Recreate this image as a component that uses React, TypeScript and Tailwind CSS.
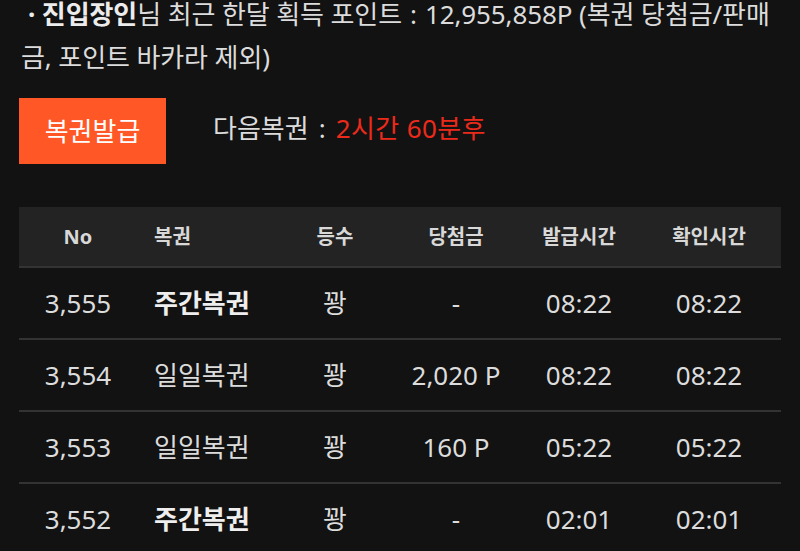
import React from "react";

const rows = [
  { no: "3,555", name: "주간복권", bold: true, rank: "꽝", prize: "-", issued: "08:22", checked: "08:22" },
  { no: "3,554", name: "일일복권", bold: false, rank: "꽝", prize: "2,020 P", issued: "08:22", checked: "08:22" },
  { no: "3,553", name: "일일복권", bold: false, rank: "꽝", prize: "160 P", issued: "05:22", checked: "05:22" },
  { no: "3,552", name: "주간복권", bold: true, rank: "꽝", prize: "-", issued: "02:01", checked: "02:01" },
];

const grid = "grid grid-cols-[118px_142px_112px_130px_116px_1fr] items-center";

export default function App() {
  return (
    <div
      className="w-[800px] h-[551px] overflow-hidden bg-[#121212] text-[#dcdcdc] px-[19px]"
      style={{ fontFamily: '"Noto Sans", "Noto Sans CJK KR", sans-serif' }}
    >
      <p className="mt-[-7px] text-[26px] leading-[43px] pl-[2px] tracking-[-0.1px]">
        <span className="font-bold text-[#ececec] pl-[7px]">· 진입장인</span>님 최근 한달 획득 포인트<span className="mx-[8px]">:</span>12,955,858P (복권 당첨금/판매금, 포인트 바카라 제외)
      </p>
      <div className="mt-[19px] flex items-center">
        <button className="w-[147px] h-[66px] bg-[#ff5726] text-white text-[26px]">복권발급</button>
        <div className="ml-[47px] text-[26px] mt-[-6px]">
          다음복권<span className="mx-[10px]">:</span><span className="text-[#ec2a1c] tracking-[0.4px]">2시간 60분후</span>
        </div>
      </div>
      <div className="mt-[43px]">
        <div className={`${grid} h-[61px] bg-[#232323] border-b-2 border-[#333333] text-[20px] font-bold text-[#d8d8d8]`}>
          <div className="text-center">No</div>
          <div className="pl-[17px]">복권</div>
          <div className="text-center">등수</div>
          <div className="text-center">당첨금</div>
          <div className="text-center">발급시간</div>
          <div className="text-center">확인시간</div>
        </div>
        {rows.map((r) => (
          <div key={r.no} className={`${grid} h-[72px] border-b-2 border-[#333333] text-[26px]`}>
            <div className="text-center">{r.no}</div>
            <div className={`pl-[17px] ${r.bold ? "font-bold text-[#eeeeee]" : ""}`}>{r.name}</div>
            <div className="text-center">{r.rank}</div>
            <div className="text-center">{r.prize}</div>
            <div className="text-center">{r.issued}</div>
            <div className="text-center">{r.checked}</div>
          </div>
        ))}
      </div>
    </div>
  );
}
